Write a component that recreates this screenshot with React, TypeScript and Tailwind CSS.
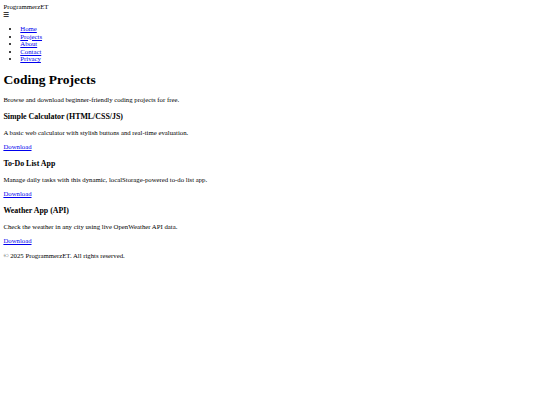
import React from 'react';

const projects = [
  {
    title: 'Simple Calculator (HTML/CSS/JS)',
    desc: 'A basic web calculator with stylish buttons and real-time evaluation.',
  },
  {
    title: 'To-Do List App',
    desc: 'Manage daily tasks with this dynamic, localStorage-powered to-do list app.',
  },
  {
    title: 'Weather App (API)',
    desc: 'Check the weather in any city using live OpenWeather API data.',
  },
];

const links = ['Home', 'Projects', 'About', 'Contact', 'Privacy'];

export default function App() {
  return (
    <div className="min-h-screen bg-white text-black font-['Liberation_Serif',serif] text-[6.75px] leading-[7.5px] p-[3.4px]">
      <header>
        <div>ProgrammerzET</div>
        <div>☰</div>
        <nav>
          <ul className="list-disc pl-[16.9px] my-[6.75px]">
            {links.map((l) => (
              <li key={l}>
                <a href="#" className="text-[#0000EE] underline">
                  {l}
                </a>
              </li>
            ))}
          </ul>
        </nav>
      </header>

      <main>
        <h1 className="text-[13.5px] leading-[15.5px] font-bold my-[9px]">Coding Projects</h1>
        <p className="my-[6.2px]">Browse and download beginner-friendly coding projects for free.</p>

        {projects.map((p) => (
          <section key={p.title}>
            <h3 className="text-[7.9px] leading-[9px] font-bold my-[8.4px]">{p.title}</h3>
            <p className="my-[6.2px]">{p.desc}</p>
            <p className="my-[6.2px]">
              <a href="#" className="text-[#0000EE] underline">
                Download
              </a>
            </p>
          </section>
        ))}
      </main>

      <footer className="mt-[7.5px]">
        <p className="my-[6.2px]">© 2025 ProgrammerzET. All rights reserved.</p>
      </footer>
    </div>
  );
}
